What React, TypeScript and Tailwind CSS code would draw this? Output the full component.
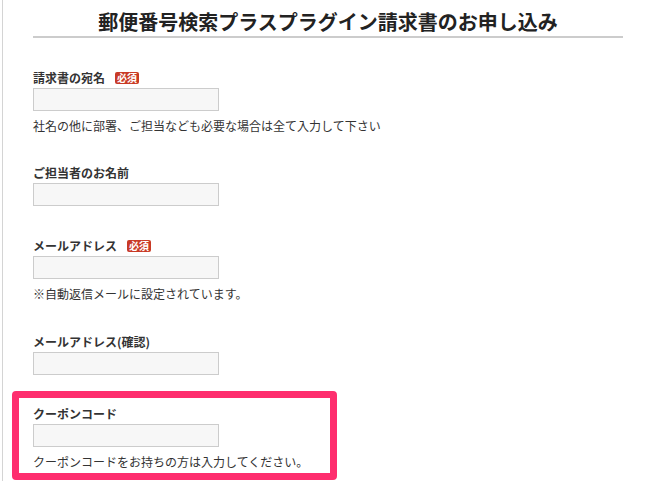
const font = { fontFamily: '"Hiragino Kaku Gothic ProN", "Noto Sans CJK JP", "Noto Sans", sans-serif' };

function Badge() {
  return (
    <span className="ml-[10px] inline-flex h-[12px] w-[24px] items-center justify-center rounded-[2px] bg-[#c83a26] text-[10px] font-bold leading-none text-white">
      必須
    </span>
  );
}

function Field({
  label,
  required,
  help,
  className,
}: {
  label: string;
  required?: boolean;
  help?: string;
  className?: string;
}) {
  return (
    <div className={className}>
      <div className="flex h-[18px] items-center text-[12px] font-bold leading-[18px] text-[#333]">
        {label}
        {required && <Badge />}
      </div>
      <input
        type="text"
        className="mt-[1px] block h-[23px] w-[186px] border border-[#cccccc] bg-[#f7f7f7] outline-none"
      />
      {help && <p className="mt-[6px] text-[12px] leading-[18px] text-[#333]">{help}</p>}
    </div>
  );
}

export default function App() {
  return (
    <div style={font} className="ml-[2px] min-h-[481px] border-l border-[#d4d4d4] bg-white">
      <div className="relative pl-[30px]">
        <h1 className="w-[590px] border-b-2 border-[#cccccc] pt-[8px] text-center text-[20px] font-bold leading-[28px] text-[#222]">
          郵便番号検索プラスプラグイン請求書のお申し込み
        </h1>

        <Field
          className="mt-[31px]"
          label="請求書の宛名"
          required
          help="社名の他に部署、ご担当なども必要な場合は全て入力して下さい"
        />
        <Field className="mt-[29px]" label="ご担当者のお名前" />
        <Field
          className="mt-[31px]"
          label="メールアドレス"
          required
          help="※自動返信メールに設定されています。"
        />
        <Field className="mt-[30px]" label="メールアドレス(確認)" />
      </div>

      <div className="ml-[9px] mt-[16px] w-[325px] rounded-[4px] border-[7px] border-[#fe2e6e] pb-[2px] pl-[14px] pt-[7px]">
        <Field label="クーポンコード" help="クーポンコードをお持ちの方は入力してください。" />
      </div>
    </div>
  );
}
